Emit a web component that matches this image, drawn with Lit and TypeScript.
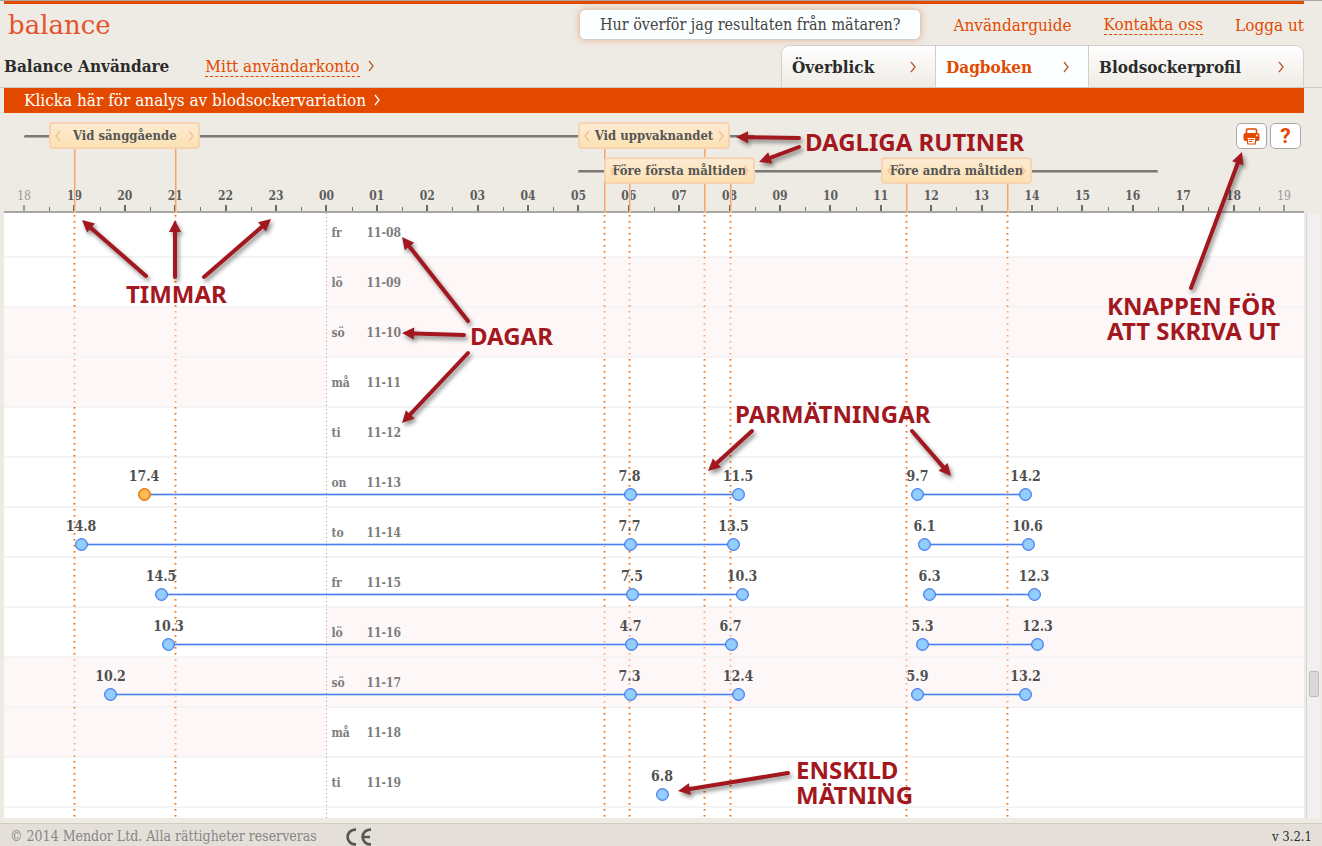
import { LitElement, html, svg, css } from "lit";
import { customElement } from "lit/decorators.js";
import { classMap } from "lit/directives/class-map.js";

/** Positions on the time axis are hours counted from 18:00; the axis spans 25 hours. */
const SPAN = 25;
const pct = (hours: number) => `${(hours / SPAN) * 100}%`;

interface Reading {
  at: number;
  value: string;
  alert?: boolean;
}

interface Day {
  name: string;
  date: string;
  nightShade?: boolean;
  dayShade?: boolean;
  series: Reading[][];
}

const r = (at: number, value: string, alert = false): Reading => ({ at, value, alert });

const DAYS: Day[] = [
  { name: "fr", date: "11-08", series: [] },
  { name: "lö", date: "11-09", dayShade: true, series: [] },
  { name: "sö", date: "11-10", nightShade: true, dayShade: true, series: [] },
  { name: "må", date: "11-11", nightShade: true, series: [] },
  { name: "ti", date: "11-12", series: [] },
  { name: "on", date: "11-13", series: [
    [r(2.381, "17.4", true), r(12.014, "7.8"), r(14.167, "11.5")],
    [r(17.728, "9.7"), r(19.871, "14.2")],
  ] },
  { name: "to", date: "11-14", series: [
    [r(1.131, "14.8"), r(12.014, "7.7"), r(14.077, "13.5")],
    [r(17.867, "6.1"), r(19.911, "10.6")],
  ] },
  { name: "fr", date: "11-15", series: [
    [r(2.718, "14.5"), r(12.063, "7.5"), r(14.246, "10.3")],
    [r(17.966, "6.3"), r(20.04, "12.3")],
  ] },
  { name: "lö", date: "11-16", dayShade: true, series: [
    [r(2.867, "10.3"), r(12.034, "4.7"), r(14.018, "6.7")],
    [r(17.827, "5.3"), r(20.109, "12.3")],
  ] },
  { name: "sö", date: "11-17", nightShade: true, dayShade: true, series: [
    [r(1.716, "10.2"), r(12.014, "7.3"), r(14.167, "12.4")],
    [r(17.728, "5.9"), r(19.871, "13.2")],
  ] },
  { name: "må", date: "11-18", nightShade: true, series: [] },
  { name: "ti", date: "11-19", series: [[r(12.659, "6.8")]] },
];

const ROUTINES = [
  { label: "Vid sänggående", start: 0.5, lane: 1 },
  { label: "Vid uppvaknandet", start: 11, lane: 1 },
  { label: "Före första måltiden", start: 11.5, lane: 2 },
  { label: "Före andra måltiden", start: 17, lane: 2 },
];

const RAILS = [
  { start: 0, end: 14.5, lane: 1 },
  { start: 11, end: 22.5, lane: 2 },
];

const chevron = (cls = "") => html`<svg class="chev ${cls}" viewBox="0 0 6 12" width="6" height="12" aria-hidden="true">
  <path d="M1 1l4 5l-4 5" fill="none" stroke="currentColor" stroke-width="1.3" /></svg>`;

@customElement("time-axis")
class TimeAxis extends LitElement {
  static styles = css`
    :host { display: block; position: relative; height: 100px; padding: 0 20px; border-bottom: 2px solid #a7a79f;
      box-sizing: border-box; font-family: "DejaVu Serif Condensed", "DejaVu Serif", serif; }
    .plot { position: relative; height: 100%; }
    .rail { position: absolute; height: 2px; border-bottom: 1px solid #b0aeab; background: #7b7977; border-radius: 2px; }
    .lane1 { top: 22px; }
    .lane2 { top: 57px; }
    .stem { position: absolute; width: 1px; bottom: -2px; background: #f7a368; box-shadow: 1px 0 #f6c7a2; }
    .stem.lane1 { top: 36px; }
    .stem.lane2 { top: 70px; }
    .routine { position: absolute; width: 12%; height: 27px; padding: 0 4px; box-sizing: border-box; cursor: pointer;
      display: flex; align-items: center; justify-content: space-between; border: 2px solid #f7d3b3; border-radius: 4px;
      background: linear-gradient(#fdebd3, #fbe2b2); color: #555; font: bold 13px/16px "DejaVu Serif Condensed", "DejaVu Serif", serif;
      white-space: nowrap; }
    .routine.lane1 { top: 9px; }
    .routine.lane2 { top: 44px; }
    .routine span { flex: 1; width: 0; display: flex; justify-content: center; }
    .chev { flex: none; color: #f5c094; }
    .flip { transform: scaleX(-1); }
    .hour { position: absolute; bottom: 0; width: 40px; margin-left: -20px; text-align: center; color: #5d5d5d;
      font-size: 12px; line-height: 16px; font-weight: bold; padding-bottom: 7px; }
    .hour::after { content: ""; position: absolute; left: 19px; bottom: 0; width: 2px; height: 6px; background: #6b6b68; }
    .hour.edge { color: #9a9a98; font-weight: normal; }
    .hour.edge::after { background: #9a9a98; }
    .half { position: absolute; bottom: 0; width: 1px; height: 4px; background: #777; }
    .tools { position: absolute; right: 3px; top: 10px; display: flex; gap: 3px; }
    .tools button { width: 31px; height: 26px; padding: 0; border: 1px solid #a9a9a9; border-radius: 5px; background: #fff;
      color: #e34a00; font: bold 21px/22px Roboto, sans-serif; display: grid; place-items: center; cursor: pointer; }
  `;

  render() {
    const hours = Array.from({ length: SPAN + 1 }, (_, i) => i);
    return html`
      <div class="plot">
        ${RAILS.map((l) => html`<div class="rail lane${l.lane}" style="left:${pct(l.start)};width:${pct(l.end - l.start)}"></div>`)}
        ${hours.map((h) => html`
          <div class=${classMap({ hour: true, edge: h === 0 || h === SPAN })} style="left:${pct(h)}">${String((h + 18) % 24).padStart(2, "0")}</div>
          ${h < SPAN ? html`<div class="half" style="left:${pct(h + 0.5)}"></div>` : ""}`)}
        ${ROUTINES.map((t) => html`
          <div class="stem lane${t.lane}" style="left:${pct(t.start + 0.5)}"></div>
          <div class="stem lane${t.lane}" style="left:${pct(t.start + 2.5)}"></div>`)}
        ${ROUTINES.map((t) => html`
          <button class="routine lane${t.lane}" style="left:${pct(t.start)}">
            ${chevron("flip")}<span>${t.label}</span>${chevron()}
          </button>`)}
      </div>
      <div class="tools">
        <button aria-label="Skriv ut">
          <svg width="17" height="17" viewBox="0 0 17 17" aria-hidden="true">
            <path d="M3.500 5V2.200Q3.500 1 4.700 1h7.600Q13.500 1 13.500 2.200V5" fill="none" stroke="#e34a00" stroke-width="1.600" />
            <path d="M2.500 5h12Q16.500 5 16.500 7v4Q16.500 13 14.500 13h-12Q.5 13 .5 11V7Q.5 5 2.500 5z" fill="#e34a00" />
            <path d="M4 9.500h9l-.8 6.500H4.800z" fill="#fff" stroke="#e34a00" stroke-width="1.200" />
            <path d="M5.800 11.500h5M5.800 13.500h3.600" stroke="#e34a00" stroke-width="1" />
            <circle cx="14" cy="7.500" r=".9" fill="#fff" />
          </svg>
        </button>
        <button aria-label="Hjälp">?</button>
      </div>`;
  }
}

@customElement("day-row")
class DayRow extends LitElement {
  static properties = { day: { attribute: false } };
  declare day: Day;

  static styles = css`
    :host { display: block; position: relative; height: 50px; padding: 0 20px; box-sizing: border-box; border-bottom: 2px solid #f4f4f4; }
    .shade { position: absolute; z-index: 1; top: 0; bottom: 0; background: rgba(251, 239, 239, 0.5); }
    .night { left: 0; width: calc(20px + (100% - 40px) * 0.24); }
    .daytime { right: 0; width: calc(20px + (100% - 40px) * 0.76); }
    .plot { position: relative; z-index: 2; height: 100%; }
    .name { position: absolute; left: 24%; bottom: 15px; padding-left: 5px; display: grid; grid-template-columns: 35px auto;
      font-size: 12px; line-height: 16px; font-weight: bold; color: #7c7c7c; }
    .link { position: absolute; bottom: 10px; height: 1px; background: #4a7ef0; border: solid #c5d6fb; border-width: 1px 0; }
    .dot { position: absolute; bottom: 5px; width: 13px; height: 13px; margin-left: -6px; box-sizing: border-box; border-radius: 50%;
      border: 1px solid #3f74ee; background: #93cffd; box-shadow: inset 0 0 0 1px #7db2f8; }
    .alert { border-color: #e06a00; background: #ffbb55; box-shadow: inset 0 0 0 1px #f09a30; }
    .value { position: absolute; bottom: 20px; width: 60px; margin-left: -30px; text-align: center; color: #505050;
      font-size: 14px; line-height: 20px; font-weight: bold; }
  `;

  render() {
    const d = this.day;
    return html`
      ${d.nightShade ? html`<div class="shade night"></div>` : ""}
      ${d.dayShade ? html`<div class="shade daytime"></div>` : ""}
      <div class="plot">
        <div class="name"><span>${d.name}</span><span>${d.date}</span></div>
        ${d.series.map((s) => html`
          ${s.length > 1 ? html`<div class="link" style="left:${pct(s[0].at)};width:${pct(s[s.length - 1].at - s[0].at)}"></div>` : ""}
          ${s.map((p) => html`
            <div class=${classMap({ dot: true, alert: !!p.alert })} style="left:${pct(p.at)}"></div>
            <div class="value" style="left:${pct(p.at)}">${p.value}</div>`)}`)}
      </div>`;
  }
}

const ARROWS = [
  [146, 276, 82, 220], [175, 277, 175, 220], [204, 277, 271, 219],
  [468, 321, 402, 237], [464, 335, 402, 333], [468, 353, 402, 423],
  [799, 138, 736, 137], [799, 147, 759, 162],
  [1191, 288, 1242, 152],
  [752, 431, 708, 471], [912, 431, 951, 476],
  [788, 773, 678, 791],
];

const NOTES: { x: number; y: number; lines: string[] }[] = [
  { x: 126, y: 281, lines: ["TIMMAR"] },
  { x: 470, y: 323, lines: ["DAGAR"] },
  { x: 805, y: 129, lines: ["DAGLIGA RUTINER"] },
  { x: 735, y: 401, lines: ["PARMÄTNINGAR"] },
  { x: 1107, y: 293, lines: ["KNAPPEN FÖR", "ATT SKRIVA UT"] },
  { x: 796, y: 757, lines: ["ENSKILD", "MÄTNING"] },
];

@customElement("help-notes")
class HelpNotes extends LitElement {
  static styles = css`
    :host { position: absolute; inset: -1px 0 0; z-index: 3; pointer-events: none; overflow: hidden; }
    .arrows { display: block; width: 100%; height: 100%; filter: drop-shadow(2px 3px 2px rgba(0, 0, 0, 0.45));
      stroke: #a3171f; fill: #a3171f; }
    .note { position: absolute; font: bold 24px/25px "Noto Sans", sans-serif; color: #a3171f; white-space: nowrap; }
  `;

  arrow([x1, y1, x2, y2]: number[]) {
    const len = Math.hypot(x2 - x1, y2 - y1);
    const ux = (x2 - x1) / len;
    const uy = (y2 - y1) / len;
    const bx = x2 - ux * 12;
    const by = y2 - uy * 12;
    return svg`
      <line x1=${x1} y1=${y1} x2=${bx} y2=${by} stroke-width="4" stroke-linecap="round" />
      <polygon stroke="none" points="${x2},${y2} ${bx - uy * 6},${by + ux * 6} ${bx + uy * 6},${by - ux * 6}" />`;
  }

  render() {
    return html`
      <svg class="arrows" aria-hidden="true">${ARROWS.map((a) => this.arrow(a))}</svg>
      ${NOTES.map((n) => html`<div class="note" style="left:${n.x}px;top:${n.y}px">${n.lines.map((l, i) => html`${i ? html`<br />` : ""}${l}`)}</div>`)}`;
  }
}

@customElement("app-root")
class AppRoot extends LitElement {
  static styles = css`
    :host { display: flex; flex-direction: column; position: relative; min-height: 100vh; background: #eeebe4; color: #2b2b2b;
      font-family: "DejaVu Serif Condensed", "DejaVu Serif", serif; border-top: 1px solid #a9a6a3; box-sizing: border-box; }
    a { color: #e34a00; text-decoration: none; }
    .dashed { border-bottom: 1px dashed #e34a00; }
    .head { padding: 0 18px 0 4px; border-bottom: 1px solid #cfccc6; display: flex; flex-direction: column; }
    .stripe { height: 3px; background: #e34a00; }
    .line { display: flex; align-items: center; justify-content: space-between; white-space: nowrap; }
    .top { height: 41px; }
    .logo { font: 26px/30px "DejaVu Serif", serif; color: #e5532d; padding-left: 4px; }
    .links { display: flex; align-items: center; gap: 32px; font-size: 17px; line-height: 20px; }
    .ask { border: 1px solid #d5cfc8; border-radius: 6px; background: #fcffff; color: #444; height: 31px; padding: 0 20px;
      font: 16px/20px "DejaVu Serif Condensed", "DejaVu Serif", serif; box-shadow: 0 0 6px rgba(240, 120, 60, 0.5); cursor: pointer; }
    .user { display: flex; align-items: center; gap: 36px; font-size: 17px; line-height: 20px; }
    .account { display: flex; align-items: center; gap: 8px; }
    .tabs { display: flex; height: 41px; border: 1px solid #d2cec8; border-bottom: 0; border-radius: 9px 9px 0 0; overflow: hidden; }
    .tab { display: flex; align-items: center; justify-content: space-between; box-sizing: border-box; padding: 0 19px 0 10px;
      color: #2b2b2b; font-size: 17px; line-height: 20px; font-weight: bold; background: linear-gradient(#fff, #eeebe4); width: 153px; }
    .tab + .tab { border-left: 1px solid #d2cec8; }
    .tab.wide { width: 215px; }
    .tab.on { background: #fcffff; color: #e34a00; }
    .chev { color: #b5602c; }
    .banner { margin: 0 18px 0 4px; height: 25px; padding: 0 0 2px 20px; box-sizing: border-box; display: flex; align-items: center;
      gap: 8px; background: #e34a00; color: #fff; font-size: 17px; line-height: 20px; }
    .banner .chev { color: #fff; }
    .diary { display: grid; grid-template-columns: minmax(0, 1fr) 14px; column-gap: 2px; padding: 0 2px 5px 4px; }
    .axis { grid-column: 1; }
    .rows { grid-column: 1; position: relative; isolation: isolate; background: #fff; padding-bottom: 10px; overflow: hidden; }
    .first { margin-top: -5px; }
    .guides { position: absolute; z-index: 0; inset: 0 20px; pointer-events: none; }
    .guide { position: absolute; top: 0; bottom: 0; width: 3px; margin-left: -1px;
      background: repeating-linear-gradient(transparent 0 2px, #fb6a00 2px 3px, rgba(251, 106, 0, 0.6) 3px 4px, transparent 4px 6px);
      mask: linear-gradient(90deg, rgba(0, 0, 0, 0.4) 1px, #000 1px 2px, rgba(0, 0, 0, 0.4) 2px); }
    .midnight { position: absolute; z-index: 2; left: calc(20px + (100% - 40px) * 0.24); top: 0; bottom: 0; width: 1px;
      background: repeating-linear-gradient(#999 0 1px, transparent 1px 4px); }
    .scroll { grid-column: 2; box-sizing: border-box; border-left: 1px solid #d5d5d5; background: #f0f0f0; padding: 458px 0 0 2px; }
    .thumb { height: 26px; width: 10px; box-sizing: border-box; border: 1px solid #bcbcbc; border-radius: 2px; background: #d9d9d9; }
    .foot { flex: 1; min-height: 22px; display: flex; align-items: center; padding: 3px 10px 0; border-top: 1px solid #d0cdc5;
      background: #e4e0d9; color: #868686; font-size: 14px; line-height: 19px; gap: 29px; box-sizing: border-box; }
    .version { margin-left: auto; color: #2b2b2b; font-size: 13px; }
  `;

  render() {
    const guides = [...new Set(ROUTINES.flatMap((t) => [t.start + 0.5, t.start + 2.5]))];
    return html`
      <header class="head">
        <div class="stripe"></div>
        <div class="line top">
          <div class="logo">balance</div>
          <nav class="links">
            <button class="ask">Hur överför jag resultaten från mätaren?</button>
            <a href="#guide">Användarguide</a>
            <a class="dashed" href="#kontakt">Kontakta oss</a>
            <a href="#ut">Logga ut</a>
          </nav>
        </div>
        <div class="line">
          <div class="user">
            <b>Balance Användare</b>
            <span class="account"><a class="dashed" href="#konto">Mitt användarkonto</a>${chevron()}</span>
          </div>
          <nav class="tabs">
            <a class="tab" href="#overblick">Överblick${chevron()}</a>
            <a class="tab on" href="#dagboken">Dagboken${chevron()}</a>
            <a class="tab wide" href="#profil">Blodsockerprofil${chevron()}</a>
          </nav>
        </div>
      </header>
      <a class="banner" href="#analys">Klicka här för analys av blodsockervariation${chevron()}</a>
      <main class="diary">
        <time-axis class="axis"></time-axis>
        <div class="rows">
          ${DAYS.map((d, i) => html`<day-row class=${classMap({ first: i === 0 })} .day=${d}></day-row>`)}
          <div class="guides">
            ${guides.map((g) => html`<div class="guide" style="left:${pct(g)}"></div>`)}
          </div>
          <div class="midnight"></div>
        </div>
        <div class="scroll"><div class="thumb"></div></div>
      </main>
      <footer class="foot">
        <span>© 2014 Mendor Ltd. Alla rättigheter reserveras</span>
        <svg width="26" height="18" viewBox="0 0 26 18" role="img" aria-label="CE" fill="none" stroke="#565656" stroke-width="2.700">
          <path d="M10 1.600H9A7.400 7.400 0 0 0 9 16.400H10M25 1.600H24A7.400 7.400 0 0 0 24 16.400H25M17 9H24" />
        </svg>
        <span class="version">v 3.2.1</span>
      </footer>
      <help-notes></help-notes>`;
  }
}
